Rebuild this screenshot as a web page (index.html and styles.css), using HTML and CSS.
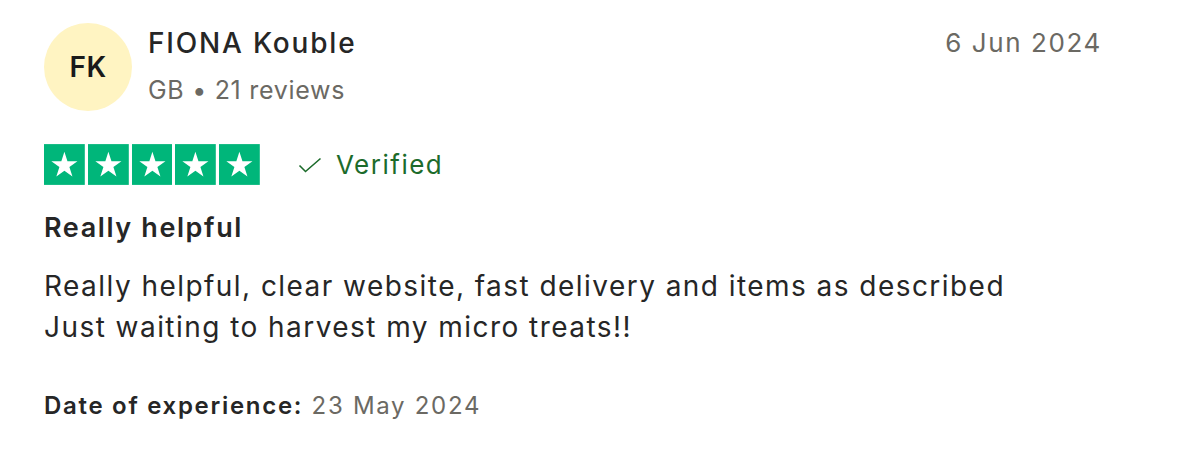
FILE: index.html
```html
<!DOCTYPE html>
<html>
<head>
    <link rel="stylesheet" href="styles.css">
</head>
<body>
    <div class="review">
        <div class="review-header">
            <div class="avatar">FK</div>
            <div class="consumer">
                <div class="consumer-name">FIONA Kouble</div>
                <div class="consumer-meta">GB &bull; 21 reviews</div>
            </div>
            <div class="review-date">6 Jun 2024</div>
        </div>
        <div class="rating-row">
            <div class="stars">
                <svg class="star" viewBox="0 0 40 40"><rect width="40" height="40" fill="#00b67a"/><path d="M20 7.5l3 9.3h9.8l-7.9 5.7 3 9.3-7.9-5.7-7.9 5.7 3-9.3-7.9-5.7H17z" fill="#fff"/></svg>
                <svg class="star" viewBox="0 0 40 40"><rect width="40" height="40" fill="#00b67a"/><path d="M20 7.5l3 9.3h9.8l-7.9 5.7 3 9.3-7.9-5.7-7.9 5.7 3-9.3-7.9-5.7H17z" fill="#fff"/></svg>
                <svg class="star" viewBox="0 0 40 40"><rect width="40" height="40" fill="#00b67a"/><path d="M20 7.5l3 9.3h9.8l-7.9 5.7 3 9.3-7.9-5.7-7.9 5.7 3-9.3-7.9-5.7H17z" fill="#fff"/></svg>
                <svg class="star" viewBox="0 0 40 40"><rect width="40" height="40" fill="#00b67a"/><path d="M20 7.5l3 9.3h9.8l-7.9 5.7 3 9.3-7.9-5.7-7.9 5.7 3-9.3-7.9-5.7H17z" fill="#fff"/></svg>
                <svg class="star" viewBox="0 0 40 40"><rect width="40" height="40" fill="#00b67a"/><path d="M20 7.5l3 9.3h9.8l-7.9 5.7 3 9.3-7.9-5.7-7.9 5.7 3-9.3-7.9-5.7H17z" fill="#fff"/></svg>
            </div>
            <div class="verified">
                <svg class="check" viewBox="0 0 24 16"><path d="M1.5 8.5l6 6L22.5 1.5" fill="none" stroke="#1c6b2b" stroke-width="1.6"/></svg>
                <span>Verified</span>
            </div>
        </div>
        <h2 class="review-title">Really helpful</h2>
        <p class="review-text">Really helpful, clear website, fast delivery and items as described<br>Just waiting to harvest my micro treats!!</p>
        <p class="experience"><b>Date of experience:</b> 23 May 2024</p>
    </div>
</body>
</html>
```

FILE: styles.css
```css
body {
    margin: 0;
    background: #fff;
    font-family: Inter, "Liberation Sans", sans-serif;
    color: #262626;
}

.review {
    padding: 23px 93px 0 44px;
}

.review-header {
    display: flex;
    align-items: flex-start;
}

.avatar {
    width: 88px;
    height: 88px;
    border-radius: 50%;
    background: #fff4c2;
    display: flex;
    align-items: center;
    justify-content: center;
    font-size: 28px;
    font-weight: 600;
    letter-spacing: 0.5px;
    color: #1a1a1a;
    flex-shrink: 0;
}

.consumer {
    margin-left: 16px;
    flex: 1;
}

.consumer-name {
    font-size: 28px;
    font-weight: 500;
    letter-spacing: 1.8px;
    line-height: 42px;
    margin-top: -1px;
}

.consumer-meta {
    font-size: 25px;
    color: #6b6963;
    letter-spacing: 0.7px;
    line-height: 40px;
    margin-top: 6px;
}

.review-date {
    font-size: 26px;
    color: #6b6963;
    letter-spacing: 1.6px;
    line-height: 42px;
    margin-top: -1px;
}

.rating-row {
    display: flex;
    align-items: center;
    margin-top: 33px;
}

.stars {
    display: flex;
    gap: 3px;
}

.star {
    width: 40.8px;
    height: 41px;
    display: block;
}

.verified {
    display: flex;
    align-items: center;
    margin-left: 38px;
    color: #1c6b2b;
    font-size: 26px;
    letter-spacing: 1.5px;
}

.check {
    width: 24px;
    height: 16px;
    margin-right: 14px;
}

.review-title {
    font-size: 27px;
    font-weight: 600;
    letter-spacing: 1.6px;
    margin: 23px 0 0;
    line-height: 40px;
}

.review-text {
    font-size: 28px;
    letter-spacing: 1.45px;
    line-height: 41px;
    margin: 18px 0 0;
}

.experience {
    font-size: 24px;
    letter-spacing: 1.7px;
    margin: 40px 0 0;
    color: #6b6963;
    line-height: 36px;
}

.experience b {
    color: #262626;
    font-weight: 600;
}
```
